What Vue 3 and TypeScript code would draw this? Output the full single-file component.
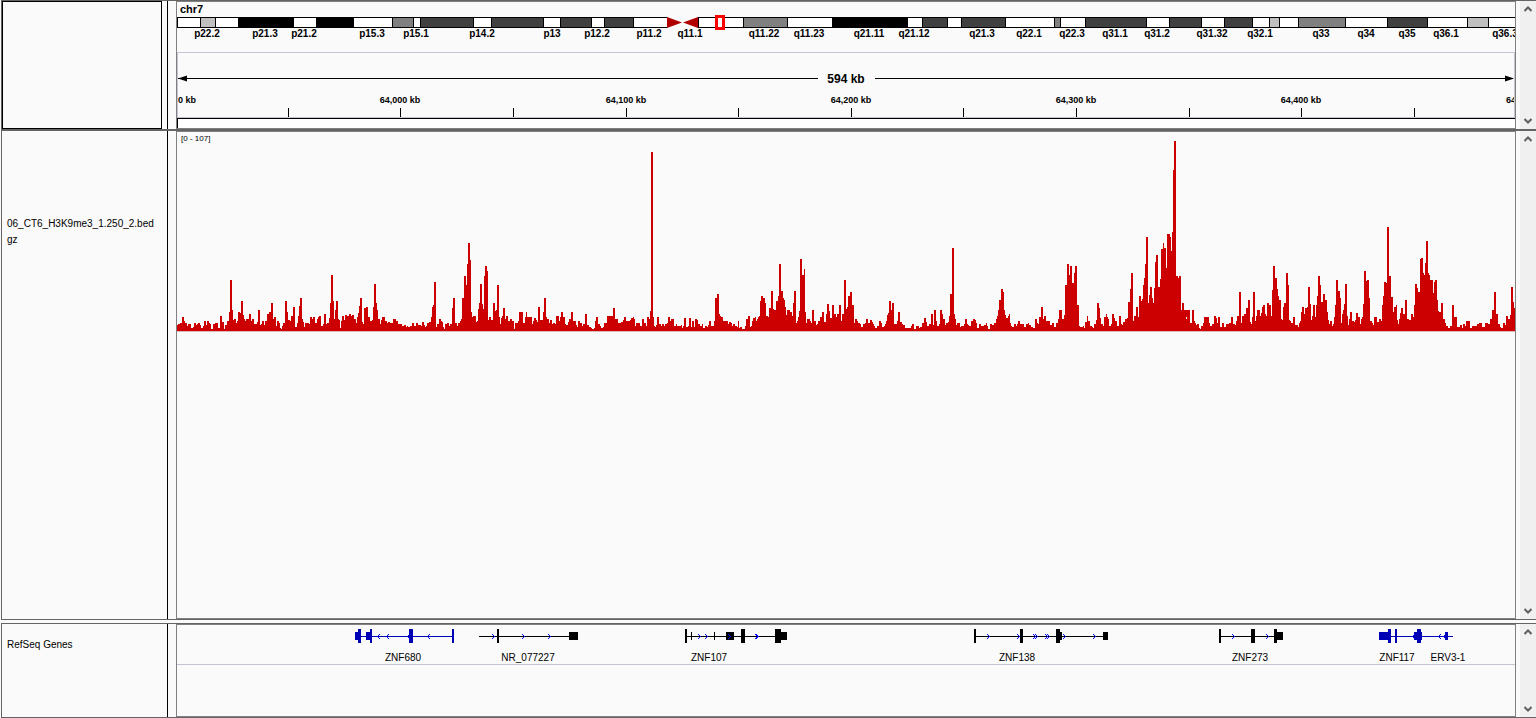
<script setup lang="ts">
interface Band { x: number; end: number; tone: string }
interface Label { x: number; text: string }
interface Exon { x: number; w: number; tall?: boolean }
interface Gene {
  start: number
  end: number
  color: string
  arrowColor: string
  forward: boolean
  exons: Exon[]
  arrows: number[]
}

// Width of the locus in screen units; every position is a share of it.
const SPAN = 1338
const pct = (v: number): string => `${(v / SPAN) * 100}%`

const bandEdges: [number, string][] = [
  [0, 'w'], [23, 'l'], [38, 'w'], [61, 'b'], [116, 'w'], [139, 'b'], [176, 'w'], [215, 'm'],
  [236, 'w'], [243, 'd'], [296, 'w'], [314, 'd'], [366, 'w'], [383, 'd'], [414, 'w'], [427, 'd'],
  [456, 'w'], [490, 'c'], [521, 'w'], [566, 'm'], [610, 'w'], [655, 'b'], [730, 'w'], [745, 'd'],
  [770, 'w'], [784, 'd'], [828, 'w'], [877, 'm'], [883, 'w'], [908, 'd'], [969, 'w'], [992, 'd'],
  [1024, 'w'], [1047, 'd'], [1075, 'w'], [1092, 'l'], [1102, 'w'], [1121, 'm'], [1168, 'w'],
  [1210, 'd'], [1250, 'w'], [1290, 'l'], [1311, 'w'],
]
const tones: Record<string, string> = {
  w: '#ffffff', l: '#c0c0c0', m: '#808080', d: '#404040', b: '#000000',
}
const bands: Band[] = bandEdges
  .map(([x, tone], i) => ({ x, end: bandEdges[i + 1]?.[0] ?? SPAN + 4, tone }))
  .filter((b) => b.tone !== 'c')

const bandLabels: Label[] = [
  { x: 30, text: 'p22.2' }, { x: 88, text: 'p21.3' }, { x: 127, text: 'p21.2' },
  { x: 195, text: 'p15.3' }, { x: 239, text: 'p15.1' }, { x: 305, text: 'p14.2' },
  { x: 375, text: 'p13' }, { x: 420, text: 'p12.2' }, { x: 472, text: 'p11.2' },
  { x: 513, text: 'q11.1' }, { x: 587, text: 'q11.22' }, { x: 632, text: 'q11.23' },
  { x: 692, text: 'q21.11' }, { x: 737, text: 'q21.12' }, { x: 805, text: 'q21.3' },
  { x: 852, text: 'q22.1' }, { x: 895, text: 'q22.3' }, { x: 938, text: 'q31.1' },
  { x: 980, text: 'q31.2' }, { x: 1035, text: 'q31.32' }, { x: 1083, text: 'q32.1' },
  { x: 1144, text: 'q33' }, { x: 1189, text: 'q34' }, { x: 1230, text: 'q35' },
  { x: 1269, text: 'q36.1' }, { x: 1328, text: 'q36.3' },
]

const ticks = [111, 223, 336, 449, 561, 674, 786, 899, 1012, 1124, 1237]
const tickLabels: Label[] = [
  { x: 223, text: '64,000 kb' }, { x: 449, text: '64,100 kb' }, { x: 674, text: '64,200 kb' },
  { x: 899, text: '64,300 kb' }, { x: 1124, text: '64,400 kb' },
]

// Coverage as "position:height" steps, each block counted from its own origin.
const coverage: { origin: number; steps: string }[] = [
  {
    origin: -7,
    steps:
      '7:6 8:7 10:8 12:14 14:10 15:8 17:5 18:7 21:3 23:4 24:8 26:6 27:7 28:8 30:6 31:3 33:5 34:10 36:6 37:10 39:8 40:7 41:2 43:7 45:8 48:3 50:15 52:9 54:2 55:6 57:10 59:19 60:51 62:21 63:11 64:12 66:8 67:10 68:19 70:18 71:30 73:16 74:12 75:10 76:12 79:17 81:10 82:12 84:7 87:9 88:21 90:6 91:7 92:10 94:6 95:10 97:17 99:19 101:28 103:12 104:14 106:5 107:10 109:8 110:3 111:2 112:5 113:8 115:30 117:19 118:11 120:10 121:15 123:24 125:4 127:8 128:15 129:25 130:33 132:12 133:9 134:4 135:8 139:7 140:14 142:12 143:14 145:8 147:12 148:14 149:15 151:5 153:7 154:17 156:7 157:8 159:13 160:28 161:56 163:30 164:12 165:21 166:30 168:12 169:11 170:3 171:10 172:15 174:11 175:16 177:15 179:17 181:15 182:16 184:12 186:8 187:14 188:18 189:25 190:33 192:9 193:7 194:23 196:24 198:14 200:10 202:11 203:24 204:47 206:28 207:21 208:12 210:7 211:11 212:14 215:10 217:8 218:9 220:8 223:12 226:10 228:7 232:5 234:6 236:4 237:5 238:4 240:5 242:8 244:5 246:8 248:6 251:5 252:9 254:6 255:4 256:5 257:8 259:9 261:14 262:24 263:26 264:49 266:4 267:7 269:12 271:10 272:9 273:4 274:2 275:7 277:8 279:5 280:7 282:23 283:33 285:8 287:5 288:8 290:10 291:12 292:33 294:55 296:46 297:67 298:88 300:71 301:19 302:14 303:15 306:9 307:10 308:22 309:28 310:47 312:27 313:22 314:55 315:65 317:60 318:11 319:14 321:11 323:28 325:20 326:21 327:46 329:14 330:7 331:13 332:15 333:23 335:12 336:15 338:10',
  },
  {
    origin: 333,
    steps:
      '0:12 2:10 4:2 5:8 8:10 9:19 13:8 15:14 16:19 17:14 22:7 23:10 24:13 26:11 27:9 28:24 30:11 33:19 34:33 36:14 37:12 39:8 40:11 42:7 43:8 45:7 46:15 49:10 50:14 51:19 53:14 55:7 56:6 58:9 59:12 61:19 63:10 66:6 67:4 68:10 70:8 72:5 73:7 75:17 77:6 79:4 81:3 82:2 84:3 85:10 86:14 88:7 90:5 91:3 93:4 94:8 97:15 103:23 105:12 108:8 111:9 113:11 114:14 116:10 120:11 121:13 123:14 124:12 125:5 126:8 130:5 132:12 134:8 136:5 137:14 139:12 140:20 141:179 143:14 144:5 145:4 146:6 147:14 149:7 151:5 152:7 154:5 155:7 157:8 158:14 160:10 161:12 164:5 166:7 167:5 171:6 172:3 173:5 174:13 176:4 178:5 179:13 181:4 182:10 184:4 185:12 187:11 188:7 190:5 192:7 193:3 195:5 197:4 198:6 199:10 201:5 204:10 205:33 207:37 209:17 210:15 211:14 213:10 218:7 219:9 221:8 222:5 223:7 225:5 227:4 228:10 229:3 230:4 232:2 235:5 236:12 238:15 240:4 241:5 242:10 243:13 245:14 246:10 247:12 248:14 249:15 250:30 251:35 253:33 255:28 256:15 258:14 259:23 261:40 263:22 264:21 266:30 268:35 269:67 271:40 273:33 274:31 275:24 276:16 277:21 280:19 282:15 283:28 284:40 286:8 287:10 288:14 289:20 290:72 292:56 294:62 295:19 296:8 297:12 300:10 301:8 302:21 304:10 306:6 307:7 308:10 310:14 312:19 314:9 316:17 317:27 319:20 320:13 322:26 324:17 326:14 327:17 329:26 331:10 332:17 334:51 336:22 337:24 338:35',
  },
  {
    origin: 673,
    steps:
      '0:39 2:26 4:8 5:12 7:10 8:8 10:7 11:4 13:7 15:8 16:12 18:8 20:11 22:9 23:7 24:5 25:3 27:5 29:10 31:8 32:4 34:5 35:7 36:10 37:16 38:18 39:30 41:21 42:28 44:7 47:10 48:19 50:9 52:7 53:6 55:3 61:5 62:7 64:2 66:5 69:3 70:4 72:8 74:13 76:9 77:5 79:7 81:17 83:6 84:21 86:10 87:5 89:7 90:21 92:17 93:12 95:6 96:8 98:9 99:15 100:37 102:83 104:17 105:12 106:6 107:8 110:4 111:5 114:7 115:12 117:7 118:6 119:5 121:10 123:12 125:11 126:8 127:3 129:7 131:5 134:6 136:8 137:5 138:2 140:7 142:6 144:8 146:12 147:15 148:21 149:31 151:42 153:39 154:21 155:16 156:13 158:15 159:17 160:8 161:5 162:4 164:7 166:5 167:7 168:10 170:7 174:4 176:7 178:8 179:6 181:4 183:3 185:12 187:8 188:7 189:14 191:24 193:12 194:15 196:10 200:6 202:8 204:4 206:8 208:12 209:21 212:12 214:16 215:46 217:67 219:56 220:65 222:48 224:58 225:65 227:26 229:5 230:4 233:5 234:3 235:9 237:15 238:10 240:5 242:4 243:3 244:7 246:11 247:28 249:23 250:13 251:7 253:5 254:14 256:17 257:14 258:12 259:5 261:7 262:17 264:13 265:10 267:5 269:15 271:7 272:6 273:9 275:12 277:13 278:29 280:42 281:58 283:10 284:15 286:24 288:14 289:35 291:30 292:32 293:46 294:53 295:67 296:94 298:28 299:36 300:44 302:33 303:28 304:43 305:69 306:76 308:44 310:52 311:82 313:88 314:83 316:63 317:97 320:94 321:80 322:99 323:161 324:190 326:55 328:53 329:55 331:21 332:28 334:14 337:12 338:21',
  },
  {
    origin: 1003,
    steps:
      '0:55 1:21 2:28 4:14 6:12 8:21 10:8 12:21 14:10 15:8 16:6 17:7 19:3 20:2 21:5 23:8 24:14 29:8 30:5 32:7 34:15 36:13 37:8 38:14 40:4 42:8 44:4 46:7 49:8 51:14 53:7 55:6 56:10 57:15 59:39 61:8 62:15 64:17 66:23 68:31 70:9 71:7 72:14 73:39 75:10 76:15 77:21 80:15 81:18 82:24 83:26 85:17 86:15 87:28 89:26 91:15 92:41 93:65 95:53 97:42 98:35 99:31 101:12 102:11 103:24 104:28 106:58 108:46 109:11 110:10 111:8 113:14 115:6 118:4 119:8 120:10 121:19 122:24 124:17 125:23 127:24 128:44 130:27 131:11 132:15 133:26 135:14 136:26 137:35 138:55 140:46 141:29 143:37 145:31 147:19 148:11 149:7 150:10 152:5 153:7 154:14 155:26 156:51 158:40 160:33 161:8 162:17 163:21 164:27 165:47 167:15 168:6 169:12 170:19 172:10 174:9 175:11 176:18 178:14 180:7 181:12 182:14 183:27 184:60 186:50 187:51 189:33 190:10 192:8 193:6 194:14 197:9 199:12 201:10 202:26 203:35 204:49 206:48 207:104 209:55 211:34 213:19 214:24 216:26 217:11 218:7 219:12 220:18 221:23 223:17 225:31 227:12 229:11 231:17 233:14 234:26 235:47 237:43 238:39 240:72 241:73 243:58 244:56 245:68 246:90 248:58 249:56 250:51 253:38 254:49 255:51 257:31 258:20 259:19 261:28 263:12 265:8 266:5 268:3 270:5 272:26 274:14 277:4 280:6 282:3 283:7 285:5 286:10 290:3 292:5 297:7 299:8 302:4 305:8 308:7 310:12 312:21 314:39 316:17 318:7 320:4 321:3 323:8 325:6 326:15 328:12 330:16 331:44 333:29 334:23 335:23',
  },
]
const MAX = 190
const steps = coverage
  .flatMap(({ origin, steps: list }) =>
    list.split(' ').map((s) => {
      const [x, h] = s.split(':').map(Number)
      return { x: x + origin, h }
    }),
  )
const coveragePath =
  `M0 ${MAX}` + steps.map((s) => `H${s.x}V${MAX - s.h}`).join('') + `H${SPAN}V${MAX}Z`

const black = '#000000'
const navy = '#0000b4'
const genes: Gene[] = [
  {
    start: 178, end: 277, color: navy, arrowColor: '#0000e0', forward: false,
    exons: [
      { x: 178, w: 4 }, { x: 181, w: 3, tall: true }, { x: 189, w: 4 }, { x: 193, w: 2, tall: true },
      { x: 232, w: 4, tall: true }, { x: 275, w: 2, tall: true },
    ],
    arrows: [200, 209, 230, 250],
  },
  {
    start: 302, end: 401, color: black, arrowColor: '#0000ff', forward: true,
    exons: [{ x: 320, w: 2, tall: true }, { x: 392, w: 9 }],
    arrows: [315, 345, 371],
  },
  {
    start: 508, end: 610, color: black, arrowColor: '#0000ff', forward: true,
    exons: [
      { x: 508, w: 2, tall: true }, { x: 514, w: 1 }, { x: 537, w: 1 }, { x: 549, w: 8 },
      { x: 564, w: 4, tall: true }, { x: 598, w: 6, tall: true }, { x: 604, w: 6 },
    ],
    arrows: [521, 528, 551, 578, 579],
  },
  {
    start: 797, end: 931, color: black, arrowColor: '#0000ff', forward: true,
    exons: [
      { x: 797, w: 2, tall: true }, { x: 843, w: 3, tall: true }, { x: 879, w: 4, tall: true },
      { x: 883, w: 2 }, { x: 926, w: 5 },
    ],
    arrows: [810, 840, 856, 858, 868, 870, 886, 916],
  },
  {
    start: 1042, end: 1106, color: black, arrowColor: '#0000ff', forward: true,
    exons: [
      { x: 1042, w: 2, tall: true }, { x: 1074, w: 4, tall: true }, { x: 1097, w: 3, tall: true },
      { x: 1100, w: 6 },
    ],
    arrows: [1055, 1089],
  },
  {
    start: 1202, end: 1276, color: navy, arrowColor: '#0000e0', forward: false,
    exons: [
      { x: 1202, w: 9 }, { x: 1211, w: 3, tall: true }, { x: 1218, w: 2, tall: true },
      { x: 1237, w: 8 }, { x: 1240, w: 4, tall: true }, { x: 1268, w: 3 },
    ],
    arrows: [1235, 1261, 1266],
  },
]
const geneLabels: Label[] = [
  { x: 226, text: 'ZNF680' }, { x: 351, text: 'NR_077227' }, { x: 532, text: 'ZNF107' },
  { x: 840, text: 'ZNF138' }, { x: 1073, text: 'ZNF273' }, { x: 1220, text: 'ZNF117' },
  { x: 1271, text: 'ERV3-1' },
]
</script>

<template>
  <main class="browser">
    <section class="panel header">
      <div class="name"><div class="empty"></div></div>
      <div class="data">
        <svg class="canvas" role="img" aria-label="Chromosome 7 ideogram and ruler">
          <text class="chrom" x="3" y="11">chr7</text>
          <g shape-rendering="crispEdges">
            <template v-for="b in bands" :key="b.x">
              <rect :x="pct(b.x)" y="15" :width="pct(b.end - b.x)" height="11" fill="#000" />
              <rect :x="pct(b.x + 1)" y="16" :width="pct(b.end - b.x - 1)" height="9" :fill="tones[b.tone]" />
            </template>
          </g>
          <svg :x="pct(490)" y="15" :width="pct(32)" height="11" viewBox="0 0 32 11" preserveAspectRatio="none">
            <path d="M0 0L15 5.500L0 11ZM31 0L16 5.500L31 11Z" fill="#b00000" />
          </svg>
          <rect class="locus" :x="pct(539.5)" y="14.500" :width="pct(7)" height="12" />
          <text v-for="l in bandLabels" :key="l.text" class="band" :x="pct(l.x)" y="35">{{ l.text }}</text>

          <g shape-rendering="crispEdges">
            <rect x="0" y="116" width="100%" height="10" fill="#fff" />
            <rect class="rule" x="0" y="50" width="100%" height="1" />
            <rect class="rule" x="0" y="50" width="1" height="66" />
            <rect class="rule" :x="pct(1337)" y="50" width="1" height="66" />
            <rect class="rule" x="0" y="115" width="100%" height="1" />
            <rect x="0" y="116" width="100%" height="1" />
            <rect x="0" y="116" width="1" height="10" />
            <rect x="1" y="76" :width="pct(640)" height="1" />
            <rect :x="pct(698)" y="76" :width="pct(638)" height="1" />
            <rect v-for="t in ticks" :key="t" :x="pct(t)" y="106" width="1" height="9" />
          </g>
          <path d="M1 76.500L10 73.500V79.500Z" />
          <svg :x="pct(1328)" y="73" width="9" height="7"><path d="M9 3.500L0 .5V6.500Z" /></svg>
          <text class="extent" :x="pct(669)" y="81">594 kb</text>
          <text class="tick first" x="1" y="101">0 kb</text>
          <text v-for="l in tickLabels" :key="l.text" class="tick" :x="pct(l.x)" y="101">{{ l.text }}</text>
          <svg x="0" y="90" :width="pct(1337)" height="14">
            <text class="tick first" :x="pct(1330)" y="11">64,500 kb</text>
          </svg>
        </svg>
      </div>
      <div class="scroll">
        <button type="button" aria-label="Scroll header up"><svg viewBox="0 0 8 6"><path d="M.5 5L4 1.500L7.500 5" /></svg></button>
        <button type="button" aria-label="Scroll header down"><svg viewBox="0 0 8 6"><path d="M.5 1L4 4.500L7.500 1" /></svg></button>
      </div>
    </section>

    <section class="panel tracks">
      <div class="name"><p class="track-name">06_CT6_H3K9me3_1.250_2.bed<br />gz</p></div>
      <div class="data">
        <svg class="canvas" role="img" aria-label="H3K9me3 coverage">
          <text class="range" x="4" y="9">[0 - 107]</text>
          <svg x="0" y="9" width="100%" height="190" :viewBox="`0 0 ${SPAN} ${MAX}`" preserveAspectRatio="none">
            <path :d="coveragePath" fill="#cc0000" shape-rendering="crispEdges" />
          </svg>
          <rect x="0" y="199" width="100%" height="1" fill="#dcb8b8" />
        </svg>
      </div>
      <div class="scroll">
        <button type="button" aria-label="Scroll tracks up"><svg viewBox="0 0 8 6"><path d="M.5 5L4 1.500L7.500 5" /></svg></button>
        <button type="button" aria-label="Scroll tracks down"><svg viewBox="0 0 8 6"><path d="M.5 1L4 4.500L7.500 1" /></svg></button>
      </div>
    </section>

    <section class="panel genes">
      <div class="name"><p class="gene-track-name">RefSeq Genes</p></div>
      <div class="data">
        <svg class="canvas" role="img" aria-label="RefSeq genes">
          <g v-for="g in genes" :key="g.start" shape-rendering="crispEdges">
            <rect :x="pct(g.start)" y="11" :width="pct(g.end - g.start)" height="1" :fill="g.color" />
            <rect
              v-for="e in g.exons"
              :key="e.x"
              :x="pct(e.x)"
              :y="e.tall ? 4 : 7"
              :width="pct(e.w)"
              :height="e.tall ? 14 : 8"
              :fill="g.color"
            />
            <svg v-for="a in g.arrows" :key="a" :x="pct(a)" y="9" width="3" height="5">
              <path
                :d="g.forward ? 'M0 0h1v1H0zM1 1h1v1H1zM2 2h1v1H2zM1 3h1v1H1zM0 4h1v1H0z' : 'M2 0h1v1H2zM1 1h1v1H1zM0 2h1v1H0zM1 3h1v1H1zM2 4h1v1H2z'"
                :fill="g.arrowColor"
              />
            </svg>
          </g>
          <text v-for="l in geneLabels" :key="l.text" class="gene" :x="pct(l.x)" y="36">{{ l.text }}</text>
          <rect class="rule" x="0" y="39" width="100%" height="1" />
        </svg>
      </div>
      <div class="scroll">
        <button type="button" aria-label="Scroll genes up"><svg viewBox="0 0 8 6"><path d="M.5 5L4 1.500L7.500 5" /></svg></button>
        <button type="button" aria-label="Scroll genes down"><svg viewBox="0 0 8 6"><path d="M.5 1L4 4.500L7.500 1" /></svg></button>
      </div>
    </section>
  </main>
</template>

<style>
body {
  background: #fafafa;
}
</style>

<style scoped>
.browser {
  display: flex;
  flex-direction: column;
  box-sizing: border-box;
  height: 100vh;
  padding-left: 1px;
  font-family: "Liberation Sans", Arial, sans-serif;
  color: #000;
}
.panel {
  display: grid;
  grid-template-columns: 166px minmax(0, 1fr) 16px;
  grid-template-rows: minmax(0, 1fr);
  box-sizing: border-box;
  border: 1px solid #646464;
  border-right: 0;
  background: #fafafa;
}
.header {
  height: 130px;
}
.tracks {
  flex: 1;
  min-height: 220px;
}
.genes {
  height: 95px;
  margin-top: 3px;
}
.name {
  box-sizing: border-box;
  border-right: 1px solid #000;
}
.empty {
  box-sizing: border-box;
  width: 160px;
  height: 100%;
  border: 1px solid #000;
}
.name p {
  margin: 0;
  padding-left: 5px;
  font-size: 10px;
  line-height: 16px;
  white-space: nowrap;
}
.name .track-name {
  padding-top: 85px;
}
.name .gene-track-name {
  padding-top: 13px;
}
.data {
  min-height: 0;
  margin: 0 4px 0 8px;
  border: 1px solid #808080;
}
.canvas {
  display: block;
  width: 100%;
  height: 100%;
}
.rule {
  fill: #c4c4d4;
}
.locus {
  fill: none;
  stroke: #f00;
  stroke-width: 3px;
}
.chrom {
  font-size: 11px;
  font-weight: bold;
}
.band {
  font-size: 10px;
  font-weight: bold;
  text-anchor: middle;
}
.extent {
  font-size: 12px;
  font-weight: bold;
  text-anchor: middle;
}
.tick {
  font-size: 9px;
  font-weight: bold;
  text-anchor: middle;
}
.tick.first {
  text-anchor: start;
}
.range {
  font-size: 8px;
}
.gene {
  font-size: 10px;
  text-anchor: middle;
}
.scroll {
  display: flex;
  flex-direction: column;
  justify-content: space-between;
  background: #f0f0f0;
}
.scroll button {
  display: flex;
  align-items: center;
  justify-content: center;
  width: 16px;
  height: 16px;
  padding: 0;
  border: 0;
  background: transparent;
}
.scroll svg {
  width: 8px;
  height: 6px;
  fill: none;
  stroke: #606060;
  stroke-width: 2px;
}
</style>
